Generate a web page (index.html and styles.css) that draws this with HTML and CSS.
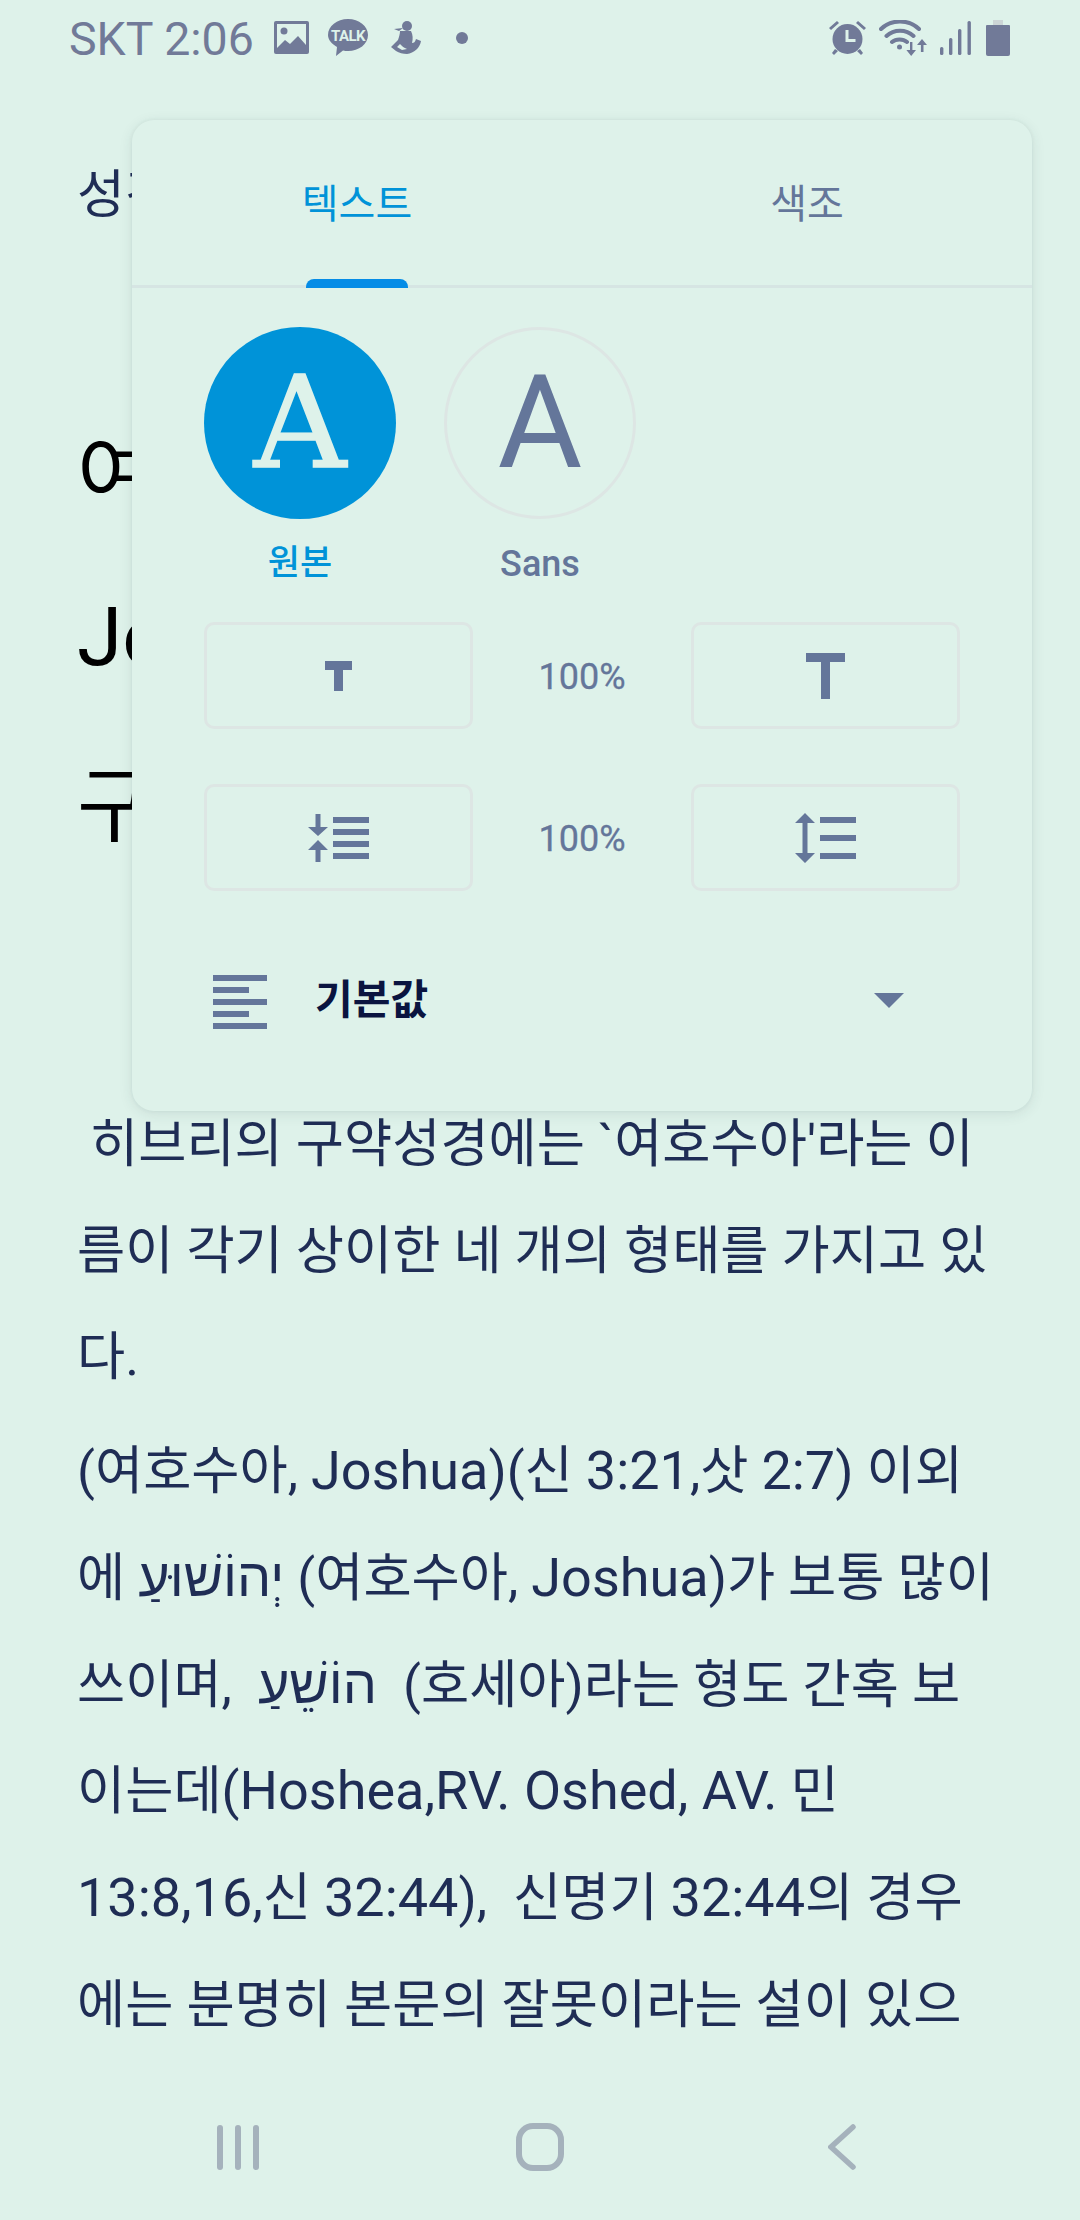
FILE: index.html
```html
<!DOCTYPE html>
<html lang="ko">
<head>
    <meta charset="UTF-8">
    <meta name="viewport" content="width=device-width, initial-scale=1.0">
    <title>텍스트 설정</title>
    <link rel="stylesheet" href="styles.css">
</head>
<body>
    <!-- Status bar -->
    <header class="status-bar">
        <span class="status-text">SKT 2:06</span>
        <svg class="ic ic-photo" width="35" height="33" viewBox="0 0 35 33">
            <path d="M2 0h31a2 2 0 0 1 2 2v29a2 2 0 0 1-2 2H2a2 2 0 0 1-2-2V2a2 2 0 0 1 2-2z"/>
            <path class="cut" d="M3 3h29v21l-8-9-8 8-5-4-8 8z"/>
            <circle cx="10" cy="10" r="3.5"/>
        </svg>
        <svg class="ic ic-talk" width="40" height="37" viewBox="0 0 40 37">
            <path d="M20 0c11 0 20 7 20 16s-9 16-20 16c-2 0-3 0-5-.5L8 37l1-9C4 25 0 21 0 16 0 7 9 0 20 0z"/>
            <text class="talk-label" x="20" y="22">TALK</text>
        </svg>
        <svg class="ic ic-figure" width="30" height="33" viewBox="0 0 30 33">
            <circle cx="16" cy="5" r="5"/>
            <path d="M3 8l9-1-4 3z"/>
            <path d="M12 10h8c2 4 2 8 1 12 2 0 3-1 4-4l5 2c-1 7-7 12-14 13-4 0-8-1-11-3l-5-4 7-7c1-3 2-6 2-9zM9 23l-3 3 5 3 5-1c-3-1-5-3-7-5z"/>
        </svg>
        <span class="status-dot"></span>
        <div class="status-right">
            <svg class="ic ic-alarm" width="39" height="35" viewBox="0 0 39 35">
                <path d="M1 8l8-7 2 2-8 7zM38 8l-8-7-2 2 8 7zM7 29l-3 4 2 2 4-4zM32 29l3 4-2 2-4-4z"/>
                <circle cx="19.500" cy="19" r="15"/>
                <path class="cut" d="M17.500 10h3v9h7v3h-10z"/>
            </svg>
            <svg class="ic ic-wifi" width="48" height="36" viewBox="0 0 48 36">
                <path class="line" d="M2 9C12-1 30-1 40 9M7.500 16C15 9 27 9 34.500 16M13 22c4-3.500 11-3.500 15 0"/>
                <circle cx="20.500" cy="27" r="2.500"/>
                <path d="M31 22h2.400v8H37l-4.800 6-4.800-6h3.600zM43 19l5 6h-3.500v7h-2.600v-7H38z"/>
            </svg>
            <svg class="ic ic-signal" width="31" height="34" viewBox="0 0 31 34">
                <rect x="0" y="26" width="3.400" height="8" rx="1.500"/>
                <rect x="9" y="17" width="3.400" height="17" rx="1.500"/>
                <rect x="18" y="8" width="3.400" height="26" rx="1.500"/>
                <rect x="27.500" y="0" width="3.400" height="34" rx="1.500"/>
            </svg>
            <svg class="ic ic-battery" width="24" height="36" viewBox="0 0 24 36">
                <rect class="nub" x="7" y="0" width="10" height="6"/>
                <path d="M1 5h22a1 1 0 0 1 1 1v28a2 2 0 0 1-2 2H2a2 2 0 0 1-2-2V6a1 1 0 0 1 1-1z"/>
            </svg>
        </div>
    </header>

    <!-- Article behind the popover -->
    <main class="article">
        <h2 class="article-kicker">성경사전</h2>
        <h1 class="article-title">
            <div class="title-first">여호수아</div>
            <div>Joshua</div>
            <div>구약</div>
        </h1>
        <p class="article-text">&nbsp;히브리의 구약성경에는 `여호수아'라는 이<br>름이 각기 상이한 네 개의 형태를 가지고 있<br>다.</p>
        <p class="article-text">(여호수아, <span class="lat">Joshua</span>)(신 <span class="lat">3:21</span>,삿 <span class="lat">2:7</span>) 이외<br>에 <span class="lat">יְהוֹשׁוּעַ</span> (여호수아, <span class="lat">Joshua</span>)가 보통 많이<br>쓰이며, &nbsp;<span class="lat">הוֹשֵׁעַ</span> &nbsp;(호세아)라는 형도 간혹 보<br>이는데(<span class="lat">Hoshea,RV. Oshed, AV.</span> 민<br><span class="lat">13:8,16</span>,신 <span class="lat">32:44</span>), &nbsp;신명기 <span class="lat">32:44</span>의 경우<br>에는 분명히 본문의 잘못이라는 설이 있으</p>
    </main>

    <!-- Text settings popover -->
    <section class="popover">
        <div class="tabs">
            <div class="tab active">텍스트</div>
            <div class="tab">색조</div>
        </div>
        <div class="fonts">
            <div class="font-opt selected">
                <div class="font-circle serif">A</div>
                <span>원본</span>
            </div>
            <div class="font-opt">
                <div class="font-circle">A</div>
                <span>Sans</span>
            </div>
        </div>
        <div class="steppers">
            <button class="step">
                <svg class="tool" width="27" height="30" viewBox="0 0 27 30"><path d="M0 0h27v9h-9v21H9V9H0z"/></svg>
            </button>
            <span class="pct">100%</span>
            <button class="step">
                <svg class="tool" width="39" height="46" viewBox="0 0 39 46"><path d="M0 0h39v9H24v37h-9V9H0z"/></svg>
            </button>
            <button class="step">
                <svg class="tool" width="61" height="48" viewBox="0 0 61 48">
                    <path d="M7.500 0h5v13H20L10 22 0 13h7.500zM10 26l10 10h-7.500v12h-5V36H0z"/>
                    <path d="M25 3h36v6H25zM25 15h36v6H25zM25 27h36v6H25zM25 39h36v6H25z"/>
                </svg>
            </button>
            <span class="pct">100%</span>
            <button class="step">
                <svg class="tool" width="61" height="50" viewBox="0 0 61 50">
                    <path d="M10 0l10 10h-7.500v30H20L10 50 0 40h7.500V10H0z"/>
                    <path d="M25 4h36v6H25zM25 22h36v6H25zM25 40h36v6H25z"/>
                </svg>
            </button>
        </div>
        <div class="align-row">
            <svg class="tool" width="54" height="54" viewBox="0 0 54 54">
                <path d="M0 0h54v6H0zM0 12h36v6H0zM0 24h54v6H0zM0 36h36v6H0zM0 48h54v6H0z"/>
            </svg>
            <span class="align-label">기본값</span>
            <span class="caret"></span>
        </div>
    </section>

    <!-- Navigation bar -->
    <footer class="nav-bar">
        <svg class="nav-ic" width="42" height="45" viewBox="0 0 42 45">
            <rect x="0" y="0" width="6" height="45" rx="3"/>
            <rect x="18" y="0" width="6" height="45" rx="3"/>
            <rect x="36" y="0" width="6" height="45" rx="3"/>
        </svg>
        <svg class="nav-ic" width="48" height="48" viewBox="0 0 48 48">
            <rect class="home" x="3" y="3" width="42" height="42" rx="14"/>
        </svg>
        <svg class="nav-ic" width="28" height="46" viewBox="0 0 28 46">
            <path class="back" d="M25 3L3 23l22 20"/>
        </svg>
    </footer>
</body>
</html>
```

FILE: styles.css
```css
* {
    margin: 0;
    padding: 0;
    box-sizing: border-box;
}

body {
    width: 1080px;
    height: 2220px;
    overflow: hidden;
    display: flex;
    flex-direction: column;
    position: relative;
    background-color: #def2ea;
    font-family: Roboto, "Noto Sans CJK KR", sans-serif;
    color: #1f2d55;
}

/* Status bar */
.status-bar {
    height: 75px;
    flex: none;
    display: flex;
    align-items: center;
    padding: 0 70px 0 69px;
    color: #717a98;
}

.status-text {
    font-size: 46.500px;
    line-height: 75px;
    padding-top: 4px;
    margin-right: 20px;
}

.ic {
    flex: none;
    fill: #717a98;
}

.ic .cut {
    fill: #def2ea;
}

.ic .line {
    fill: none;
    stroke: #717a98;
    stroke-width: 4;
    stroke-linecap: round;
}

.ic .nub {
    fill: #ccd5d6;
}

.ic-talk {
    margin-left: 19px;
}

.ic-figure {
    margin-left: 23px;
}

.talk-label {
    font-family: Roboto, sans-serif;
    font-size: 15px;
    font-weight: 700;
    letter-spacing: -0.6px;
    text-anchor: middle;
    fill: #def2ea;
}

.status-dot {
    width: 12px;
    height: 12px;
    margin-left: 35px;
    border-radius: 50%;
    background-color: #717a98;
}

.status-right {
    margin-left: auto;
    display: flex;
    align-items: center;
    gap: 12.500px;
}

.ic-battery {
    margin-left: 3px;
}

/* Article */
.article {
    flex: 1;
    overflow: hidden;
    padding: 81px 40px 0 77px;
}

.article-kicker {
    font-size: 52px;
    font-weight: 400;
    line-height: 80px;
}

.article-title {
    font-size: 82px;
    font-weight: 400;
    line-height: 170px;
    color: #000;
    margin-top: 146px;
    margin-bottom: 199px;
}

.title-first {
    padding-top: 16px;
    line-height: 154px;
}

.article-text {
    font-size: 52.400px;
    line-height: 106.700px;
    white-space: nowrap;
    margin-bottom: 7px;
}

.lat {
    font-size: 54px;
    line-height: 1;
}

/* Popover */
.popover {
    position: absolute;
    left: 132px;
    top: 120px;
    width: 900px;
    height: 991px;
    border-radius: 22px;
    background-color: #def2ea;
    box-shadow: 0 3px 14px rgba(40, 60, 70, 0.1), 0 0 4px rgba(40, 60, 70, 0.06);
}

.tabs {
    display: flex;
    height: 168px;
    border-bottom: 3px solid #d6e5e3;
}

.tab {
    flex: 1;
    display: flex;
    align-items: center;
    justify-content: center;
    position: relative;
    padding-bottom: 4px;
    font-size: 40px;
    color: #64769a;
}

.tab.active {
    color: #0093d8;
}

.tab.active::after {
    content: "";
    position: absolute;
    left: 174px;
    bottom: -3px;
    width: 102px;
    height: 9px;
    border-radius: 8px 8px 0 0;
    background-color: #058ce6;
}

.fonts {
    display: flex;
    gap: 48px;
    padding: 39px 0 0 72px;
}

.font-opt {
    width: 192px;
    display: flex;
    flex-direction: column;
    align-items: center;
    font-size: 36px;
    font-weight: 500;
    line-height: 44px;
    color: #64769a;
}

.font-opt span {
    margin-top: 23px;
}

.font-opt.selected {
    color: #0093d8;
    font-size: 35px;
}

.font-circle {
    width: 192px;
    height: 192px;
    border: 3px solid #dde6e4;
    border-radius: 50%;
    display: flex;
    align-items: center;
    justify-content: center;
    font-size: 130px;
    font-weight: 400;
    line-height: 1.2;
}

.font-circle.serif {
    border: none;
    background-color: #0093d8;
    color: #def2ea;
    font-family: "DejaVu Serif", serif;
    font-size: 128px;
    -webkit-text-stroke: 1.500px #def2ea;
}

.steppers {
    display: grid;
    grid-template-columns: 269px 1fr 269px;
    row-gap: 55px;
    margin: 36px 72px 0;
}

.step {
    height: 107px;
    display: flex;
    align-items: center;
    justify-content: center;
    border: 3px solid #dde6e4;
    border-radius: 10px;
    background: none;
}

.pct {
    display: flex;
    align-items: center;
    justify-content: center;
    padding-top: 3px;
    font-size: 36px;
    color: #64769a;
    -webkit-text-stroke: 0.300px #64769a;
}

.tool {
    fill: #64769a;
}

.align-row {
    height: 54px;
    display: flex;
    align-items: center;
    margin: 84px 72px 0;
    padding: 0 56px 0 9px;
}

.align-label {
    margin-left: 48px;
    padding-bottom: 4px;
    font-size: 41px;
    line-height: 1;
    font-weight: 700;
    color: #0a1440;
}

.caret {
    margin-left: auto;
    margin-bottom: 3px;
    border-left: 15px solid transparent;
    border-right: 15px solid transparent;
    border-top: 15px solid #64769a;
}

/* Navigation bar */
.nav-bar {
    height: 130px;
    flex: none;
    position: relative;
    display: grid;
    grid-template-columns: 238px 1fr 1fr;
    align-items: center;
    padding: 0 224px 0 217px;
    background-color: #def2ea;
}

.nav-ic {
    fill: #a5b2bc;
    margin-bottom: 16px;
}

.nav-bar .nav-ic:nth-child(2) {
    margin-left: 61px;
}

.nav-bar .nav-ic:nth-child(3) {
    justify-self: end;
}

.nav-ic .home {
    fill: none;
    stroke: #a5b2bc;
    stroke-width: 6;
}

.nav-ic .back {
    fill: none;
    stroke: #a5b2bc;
    stroke-width: 5.500;
    stroke-linecap: round;
}
```
